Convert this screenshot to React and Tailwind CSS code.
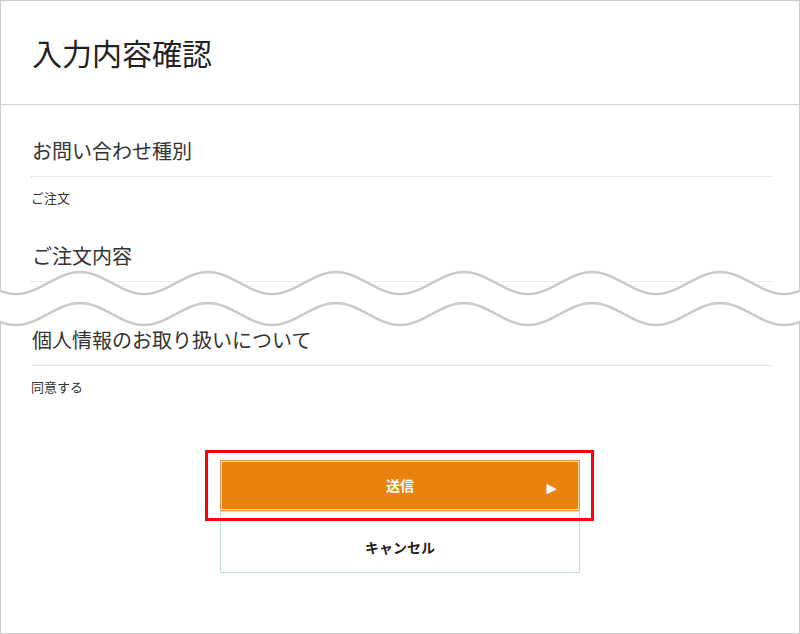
import React from 'react';

const font = { fontFamily: '"Noto Sans CJK JP", "Noto Sans", sans-serif' };

// wave path generated from a cosine, crest at x=80, period 128
function wavePoints(offset) {
	const pts = [];
	for (let x = -8; x <= 808; x += 4) {
		const y = offset - 11 * Math.cos((2 * Math.PI * (x - 80)) / 128);
		pts.push([x, y]);
	}
	return pts;
}

function Cut() {
	const top = wavePoints(23);
	const bottom = wavePoints(54);
	const line = (pts) => pts.map((p, i) => (i ? 'L' : 'M') + p[0] + ' ' + p[1].toFixed(2)).join(' ');
	const fill =
		line(top) +
		' ' +
		bottom
			.slice()
			.reverse()
			.map((p) => 'L' + p[0] + ' ' + p[1].toFixed(2))
			.join(' ') +
		' Z';
	return (
		<svg className="absolute left-0 top-[260px]" width="800" height="80" viewBox="0 0 800 80">
			<path d={fill} fill="#fff" />
			<path d={line(top)} fill="none" stroke="#c9c9c9" strokeWidth="2.5" />
			<path d={line(bottom)} fill="none" stroke="#c9c9c9" strokeWidth="2.5" />
		</svg>
	);
}

function Section({ title, value, dotted = true, className = '' }) {
	return (
		<div className={className}>
			<div
				className={
					'text-[20px] leading-[30px] pb-[10px] pl-px text-[#333] border-b ' +
					(dotted ? 'border-dotted border-[#d6d6d6]' : 'border-solid border-[#e4e4e4]')
				}
			>
				{title}
			</div>
			<div className="mt-[11px] h-[20px] text-[13px] leading-[20px] text-[#333]">{value}</div>
		</div>
	);
}

export default function App() {
	return (
		<div className="relative w-[800px] h-[634px] bg-white" style={font}>
			<div className="w-full h-full border border-[#cccccc] flex flex-col">
				<div className="h-[104px] border-b border-[#d0d0d0] flex items-center pl-[31px] pb-px">
					<h1 className="text-[30px] leading-none text-[#222]">入力内容確認</h1>
				</div>

				<div className="pl-[30px] pr-[28px] pt-[31px]">
					<Section title="お問い合わせ種別" value="ご注文" />
					<Section title="ご注文内容" value="" className="mt-[33px]" />
					<Section title="個人情報のお取り扱いについて" value="同意する" dotted={false} className="mt-[12px]" />
				</div>

				<div className="flex flex-col items-center mt-[63px]">
					<div className="relative">
						<button className="w-[360px] h-[51px] bg-[#e8830b] border border-[#ef9f4c] shadow-[inset_0_0_0_1px_#fcd9b0] text-white text-[14px] font-bold relative flex items-center justify-center">
							送信
							<span className="absolute right-[19px] top-1/2 -translate-y-1/2 text-[17px] leading-none">►</span>
						</button>
						<div className="absolute -left-[15px] -right-[14px] -top-[10px] -bottom-[10px] border-[3px] border-[#ff0000] pointer-events-none" />
					</div>
					<button className="w-[360px] h-[62px] bg-white border border-[#c3e2d3] text-[#222] text-[14px] font-bold flex items-center justify-center pt-[10px]">
						キャンセル
					</button>
				</div>
			</div>
			<Cut />
		</div>
	);
}
